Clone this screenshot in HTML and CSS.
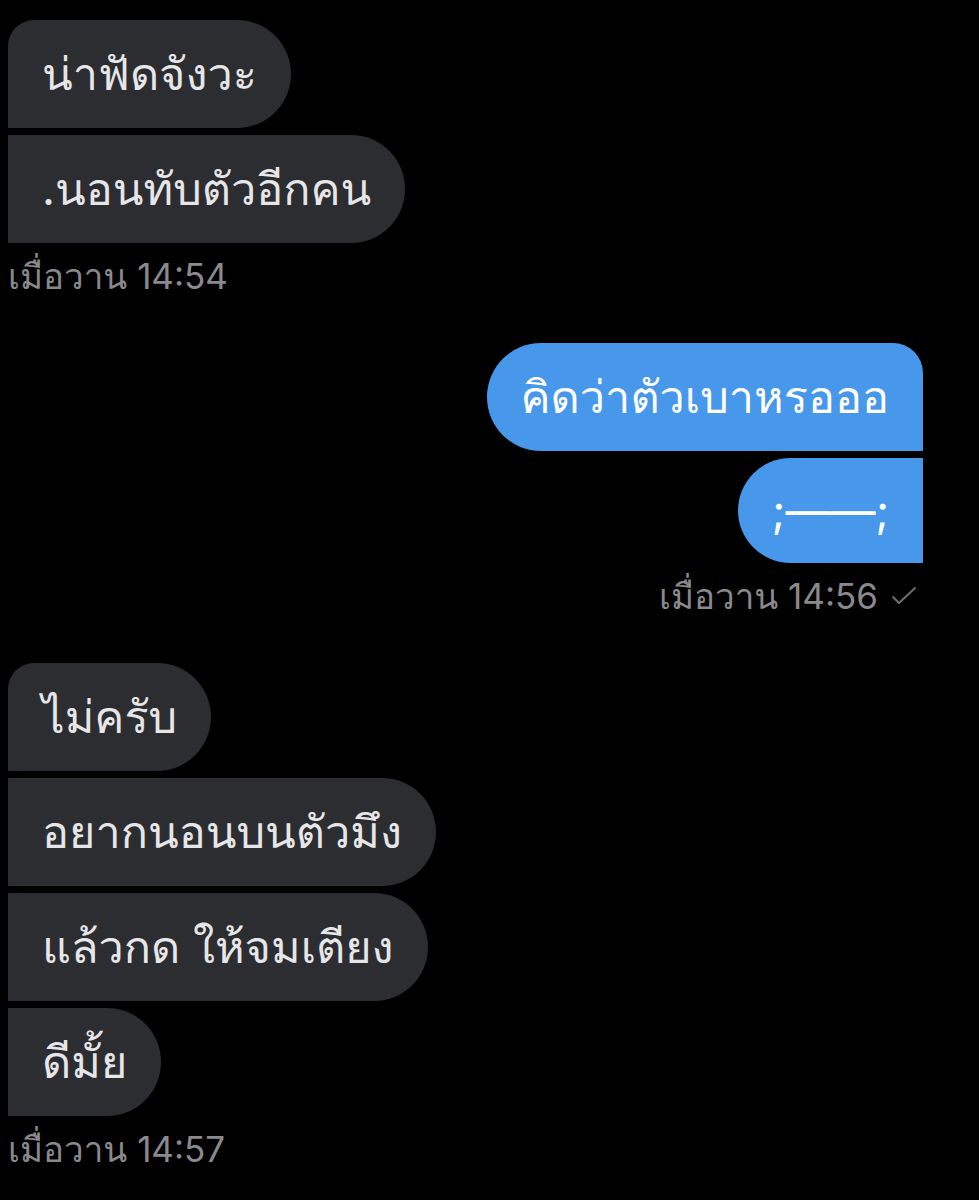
FILE: index.html
```html
<!DOCTYPE html>
<html>
<head>
    <title>แชท</title>
    <meta charset="UTF-8">
    <link rel="stylesheet" href="styles.css">
</head>
<body>
    <main class="chat">
        <section class="group incoming">
            <div class="bubble">น่าฟัดจังวะ</div>
            <div class="bubble">.นอนทับตัวอีกคน</div>
            <div class="stamp">เมื่อวาน 14:54</div>
        </section>

        <section class="group outgoing">
            <div class="bubble">คิดว่าตัวเบาหรอออ</div>
            <div class="bubble short">;——;</div>
            <div class="stamp">
                เมื่อวาน 14:56
                <svg class="tick" width="26" height="20" viewBox="0 0 26 20">
                    <polyline points="2,11 8,17 24,2" fill="none" stroke="currentColor" stroke-width="2" stroke-linecap="round" stroke-linejoin="round"/>
                </svg>
            </div>
        </section>

        <section class="group incoming">
            <div class="bubble">ไม่ครับ</div>
            <div class="bubble">อยากนอนบนตัวมึง</div>
            <div class="bubble">แล้วกด ให้จมเตียง</div>
            <div class="bubble">ดีมั้ย</div>
            <div class="stamp">เมื่อวาน 14:57</div>
        </section>
    </main>
</body>
</html>
```
FILE: styles.css
```css
body{
    margin: 0;
    background: #000;
    font-family: Inter, Loma, "Noto Sans Thai", sans-serif;
}

.chat{
    display: flex;
    flex-direction: column;
    padding: 20px 0 0;
}

.group{
    display: flex;
    flex-direction: column;
    gap: 7px;
    margin-bottom: 49px;
}

.bubble{
    display: flex;
    align-items: center;
    height: 108px;
    padding: 0 34px;
    font-size: 45px;
    white-space: nowrap;
    box-sizing: border-box;
}

.stamp{
    display: flex;
    align-items: center;
    gap: 13px;
    margin-top: 8px;
    height: 36px;
    font-size: 35px;
    color: #8a8a8e;
}

/* left side */
.incoming{
    align-items: flex-start;
    padding-left: 8px;
}

.incoming .bubble{
    background: #2c2d30;
    color: #e6e6e8;
    border-radius: 0 54px 54px 0;
}

.incoming .bubble:first-child{
    border-top-left-radius: 26px;
}

/* right side */
.outgoing{
    align-items: flex-end;
    padding-right: 56px;
}

.outgoing .bubble{
    background: #4797ea;
    color: #fff;
    border-radius: 54px 0 0 54px;
}

.outgoing .bubble:first-child{
    border-top-right-radius: 30px;
}

.outgoing .bubble.short{
    height: 105px;
}

.outgoing .stamp{
    padding-right: 6px;
}

.tick{
    color: #6e6e72;
}
```
